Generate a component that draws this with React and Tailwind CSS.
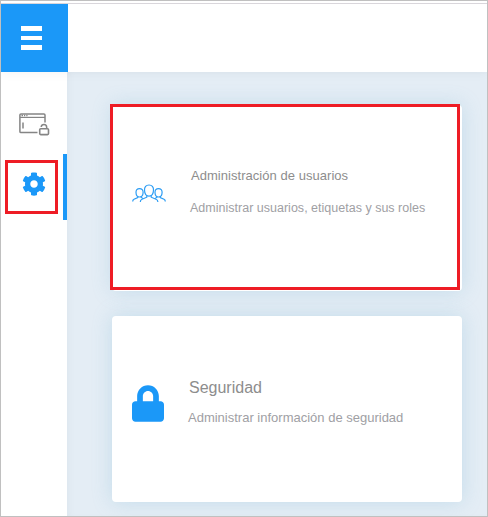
import { FaCog, FaLock } from "react-icons/fa";

function WindowLockIcon() {
  return (
    <svg width="32" height="24" viewBox="0 0 32 24" fill="none" stroke="#858585" strokeWidth="1.5">
      <path d="M26 9.5V2Q26 .9 24.9 .9H2Q.9.9.9 2V18.4Q.9 19.5 2 19.5H18.5" />
      <path d="M1 4.4H26" strokeWidth="1.2" />
      <path d="M2.5 2.6H4M5 2.6H6.2M7.3 2.6H8.5" />
      <path d="M4 9.5V15.5" />
      <rect x="20.7" y="15.8" width="8.8" height="5.8" rx="1" strokeWidth="1.6" />
      <path d="M22.2 14Q22.4 11.6 25 11.6Q27.7 11.6 27.7 14.4V15.6" strokeWidth="1.5" />
    </svg>
  );
}

function UsersIcon() {
  return (
    <svg width="34" height="19" viewBox="0 0 34 19" fill="none" stroke="#2d9df4" strokeWidth="1.2">
      <path d="M17 1C14 1 12.4 3 12.5 6C12.6 9.7 14.5 12.2 17 12.2C19.5 12.2 21.4 9.7 21.5 6C21.6 3 20 1 17 1Z" />
      <path d="M14.8 11.3V13.2L10 15.2Q8.3 15.8 8.3 18M19.2 11.3V13.2L24 15.2Q25.9 15.8 25.9 18" />
      <path d="M7.5 4.6C5.1 4.6 3.9 6.2 4 8.5C4.1 11.3 5.7 13 7.5 13C9.4 13 11 11.3 11.1 8.5C11.2 6.2 9.9 4.6 7.5 4.6Z" />
      <path d="M26.5 4.6C24.1 4.6 22.9 6.2 23 8.5C23.1 11.3 24.7 13 26.5 13C28.4 13 30 11.3 30.1 8.5C30.2 6.2 28.9 4.6 26.5 4.6Z" />
      <path d="M5.8 12.3V13.6L2 15.2Q.7 15.8.7 17.5M9.2 12.3V13.5L11 14.5M28.2 12.3V13.6L32 15.2Q33.3 15.8 33.3 17.5M24.8 12.3V13.5L23 14.5" />
    </svg>
  );
}

export default function App() {
  return (
    <div className="flex h-[517px] w-[488px] flex-col overflow-hidden border border-[#c0c0c0] bg-white font-['Liberation_Sans',Arial,sans-serif]">
      <header className="relative z-10 flex h-[71px] shrink-0 flex-col bg-white pt-[2px] shadow-[0_2px_10px_rgba(0,0,0,0.04)]">
        <div className="h-px bg-[#d9d6db]" />
        <button aria-label="Menú" className="flex h-[68px] w-[67px] flex-col gap-[5px] bg-[#1b98f8] pt-[22px] pl-5">
          <span className="h-[4.5px] w-[21px] bg-white" />
          <span className="h-[4.5px] w-[21px] bg-white" />
          <span className="h-[4.5px] w-[21px] bg-white" />
        </button>
      </header>
      <div className="flex min-h-0 flex-1">
        <nav className="flex w-[66px] shrink-0 flex-col bg-white pt-[41px]">
          <div className="h-[41px] pl-[18px]">
            <WindowLockIcon />
          </div>
          <div className="flex h-[66px] border-r-4 border-[#1b98f8] pt-[6px] pl-1">
            <div className="flex h-[54px] w-[53px] items-start justify-center border-3 border-[#ee1c25] pt-[9px] pl-1">
              <FaCog size={24} color="#1b98f8" />
            </div>
          </div>
        </nav>
        <main className="flex flex-1 flex-col gap-[25px] bg-[#e4edf5] pt-[33px] pl-[45px] shadow-[inset_5px_0_8px_-4px_rgba(0,0,0,0.04)]">
          <section className="relative flex h-[186px] w-[350px] shrink-0 rounded bg-white pl-5 shadow-[0_0_20px_rgba(110,175,210,0.28)]">
            <div className="pt-[79px]">
              <UsersIcon />
            </div>
            <div className="pl-6 whitespace-nowrap">
              <h2 className="mt-[63px] pl-px text-[13px] leading-4 tracking-[0.04px] text-[#8d8d8d]">Administración de usuarios</h2>
              <p className="mt-4 text-[12.5px] leading-4 tracking-[0.01px] text-[#a0a0a4]">Administrar usuarios, etiquetas y sus roles</p>
            </div>
            <div className="absolute -top-px -left-[2px] h-[186px] w-[350px] border-3 border-[#ee1c25]" />
          </section>
          <section className="flex h-[186px] w-[350px] shrink-0 rounded bg-white pl-5 shadow-[0_0_20px_rgba(110,175,210,0.28)]">
            <div className="w-8 pt-[69px]">
              <FaLock size={37} color="#1b98f8" className="w-8" />
            </div>
            <div className="pl-6 whitespace-nowrap">
              <h2 className="mt-[62px] pl-px text-[16px] leading-5 text-[#8d8d8d]">Seguridad</h2>
              <p className="mt-3 text-[13px] leading-4 text-[#a0a0a4]">Administrar información de seguridad</p>
            </div>
          </section>
        </main>
      </div>
    </div>
  );
}
